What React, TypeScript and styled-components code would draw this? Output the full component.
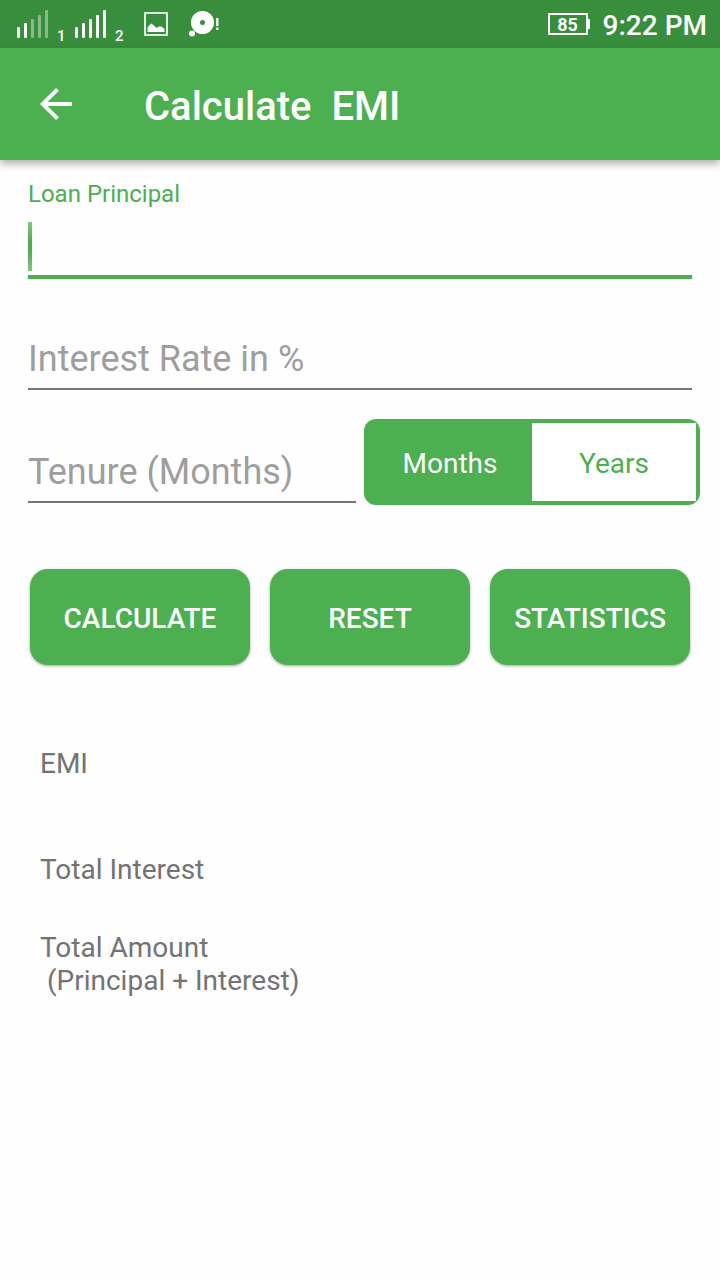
import { useState } from "react";
import styled, { createGlobalStyle, ThemeProvider } from "styled-components";

const theme = {
    colors: {
        primary: "#4caf50",
        primaryDark: "#388e3c",
        background: "#fefefe",
        hint: "#9e9e9e",
        line: "#757575",
        text: "#737373",
    },
};

type Unit = "Months" | "Years";

interface SignalProps {
    sim: number;
    strength: number;
}

const units: Unit[] = ["Months", "Years"];
const barTops = [17, 13, 9, 5, 0];

const Signal = ({sim, strength}: SignalProps) => (
    <SignalGroup>
        <svg width="31" height="28" viewBox="0 0 31 28" fill="#fff" aria-hidden="true">
            {barTops.map((top, i) => (
                <rect key={top} x={i * 7} y={top} width="3" height={28 - top} rx="1" opacity={i < strength ? 1 : 0.4}/>
            ))}
        </svg>
        <SimNumber>{sim}</SimNumber>
    </SignalGroup>
);

const PictureIcon = () => (
    <svg width="24" height="24" viewBox="0 0 24 24" aria-hidden="true">
        <rect x="1" y="1" width="22" height="22" fill="none" stroke="#fff" strokeOpacity="0.85" strokeWidth="2"/>
        <path d="M3.500 20v-4.500l2-2.500 2-1.500 2.500 2 2.500 2.500 2.500-1.500h2.500l3 2.500v3z" fill="#fff"/>
    </svg>
);

const DiscIcon = () => (
    <svg width="31" height="26" viewBox="0 0 31 26" fill="#fff" aria-hidden="true">
        <path fillRule="evenodd" d="M13.500 0a11.500 11.500 0 1 1 0 23a11.500 11.500 0 1 1 0-23zM13.500 9a2.500 2.500 0 1 0 0 5a2.500 2.500 0 1 0 0-5z"/>
        <circle cx="3" cy="22.500" r="3"/>
        <rect x="27" y="7" width="2.500" height="8" opacity="0.9"/>
        <rect x="27" y="16.500" width="2.500" height="2.500" opacity="0.9"/>
    </svg>
);

const App = () => {
    const [principal, setPrincipal] = useState("");
    const [rate, setRate] = useState("");
    const [tenure, setTenure] = useState("");
    const [unit, setUnit] = useState<Unit>("Months");

    const reset = () => {
        setPrincipal("");
        setRate("");
        setTenure("");
    };

    return (
        <ThemeProvider theme={theme}>
            <GlobalStyle/>
            <StatusBar>
                <StatusLeft>
                    <Signal sim={1} strength={2}/>
                    <Signal sim={2} strength={5}/>
                </StatusLeft>
                <StatusIcons>
                    <PictureIcon/>
                    <DiscIcon/>
                </StatusIcons>
                <Battery>85</Battery>
                <Clock>9:22 PM</Clock>
            </StatusBar>

            <AppBar>
                <BackButton type="button" aria-label="Back">
                    <svg width="32" height="32" viewBox="0 0 32 32" fill="#fff" aria-hidden="true">
                        <path d="M32 14H7.660L18.840 2.820 16 0 0 16l16 16 2.820-2.820L7.660 18H32z"/>
                    </svg>
                </BackButton>
                <Title>Calculate  EMI</Title>
            </AppBar>

            <main>
                <Form onSubmit={(e) => e.preventDefault()}>
                    <Field>
                        <Label htmlFor="principal">Loan Principal</Label>
                        <InputWrap>
                            <ActiveInput id="principal" inputMode="decimal" value={principal} onChange={(e) => setPrincipal(e.target.value)}/>
                            {!principal && <Caret/>}
                        </InputWrap>
                    </Field>
                    <RateField>
                        <Input aria-label="Interest Rate in %" placeholder="Interest Rate in %" inputMode="decimal" value={rate} onChange={(e) => setRate(e.target.value)}/>
                    </RateField>
                    <TenureRow>
                        <TenureField>
                            <Input aria-label={`Tenure (${unit})`} placeholder={`Tenure (${unit})`} inputMode="numeric" value={tenure} onChange={(e) => setTenure(e.target.value)}/>
                        </TenureField>
                        <Toggle role="radiogroup" aria-label="Tenure unit">
                            {units.map((item) => (
                                <Option key={item} $active={item === unit}>
                                    <input type="radio" name="unit" value={item} checked={item === unit} onChange={() => setUnit(item)}/>
                                    {item}
                                </Option>
                            ))}
                        </Toggle>
                    </TenureRow>
                    <Actions>
                        <Button type="submit">CALCULATE</Button>
                        <Button type="button" onClick={reset}>RESET</Button>
                        <Button type="button">STATISTICS</Button>
                    </Actions>
                </Form>

                <Results>
                    <Result $height={106}>EMI</Result>
                    <Result $height={78}>Total Interest</Result>
                    <Result $height={66}>{"Total Amount\n (Principal + Interest)"}</Result>
                </Results>
            </main>
        </ThemeProvider>
    );
};

const GlobalStyle = createGlobalStyle`
    * {
        box-sizing: border-box;
    }

    body {
        margin: 0;
        background: ${theme.colors.background};
        font-family: Roboto, sans-serif;
    }

    input, button {
        font-family: inherit;
    }
`;

const StatusBar = styled.header`
    display: flex;
    align-items: center;
    height: 48px;
    padding: 0 13px 0 17px;
    background: ${({theme}) => theme.colors.primaryDark};
    color: #fff;
`;

const StatusLeft = styled.div`
    display: flex;
    gap: 10px;
`;

const SignalGroup = styled.div`
    display: flex;
    align-items: flex-end;
    gap: 9px;
`;

const SimNumber = styled.span`
    width: 8px;
    height: 28px;
    padding-top: 17px;
    font-size: 15px;
    font-weight: 500;
    line-height: 18px;
`;

const StatusIcons = styled.div`
    display: flex;
    align-items: center;
    gap: 21px;
    margin-left: 21px;
    margin-right: auto;
`;

const Battery = styled.div`
    position: relative;
    width: 40px;
    height: 22px;
    border: 2px solid #fff;
    font-size: 18px;
    font-weight: 700;
    line-height: 20px;
    text-align: center;

    &::after {
        content: "";
        position: absolute;
        top: 4px;
        right: -4px;
        width: 2px;
        height: 10px;
        background: #fff;
    }
`;

const Clock = styled.time`
    margin-left: 15px;
    padding-top: 4px;
    font-size: 28px;
    font-weight: 500;
    line-height: 32px;
`;

const AppBar = styled.div`
    display: flex;
    align-items: center;
    height: 112px;
    padding-left: 32px;
    background: ${({theme}) => theme.colors.primary};
    box-shadow: 0 4px 8px rgba(0, 0, 0, 0.3);
    color: #fff;
`;

const BackButton = styled.button`
    display: flex;
    padding: 8px;
    border: 0;
    background: none;
    cursor: pointer;
`;

const Title = styled.h1`
    margin: 0;
    padding: 6px 0 0 64px;
    font-size: 40px;
    font-weight: 500;
    line-height: 48px;
    white-space: pre;
`;

const Form = styled.form`
    padding-top: 20px;
`;

const Field = styled.div`
    padding: 0 28px;
`;

const RateField = styled(Field)`
    margin-top: 59px;
`;

const Label = styled.label`
    display: block;
    color: ${({theme}) => theme.colors.primary};
    font-size: 24px;
    line-height: 28px;
`;

const InputWrap = styled.div`
    position: relative;
`;

const Input = styled.input`
    display: block;
    width: 100%;
    height: 52px;
    padding: 0 0 8px;
    border: 0;
    border-bottom: 2px solid ${({theme}) => theme.colors.line};
    border-radius: 0;
    outline: 0;
    background: none;
    color: #212121;
    font-size: 36px;
    line-height: 42px;

    &::placeholder {
        color: ${({theme}) => theme.colors.hint};
        opacity: 1;
    }
`;

const ActiveInput = styled(Input)`
    height: 71px;
    padding-top: 14px;
    border-bottom: 4px solid ${({theme}) => theme.colors.primary};
`;

const Caret = styled.span`
    position: absolute;
    left: 0;
    bottom: 8px;
    width: 4px;
    height: 49px;
    background: linear-gradient(#81c784, ${({theme}) => theme.colors.primary} 40%, ${({theme}) => theme.colors.primary} 60%, #81c784);
    pointer-events: none;
`;

const TenureRow = styled.div`
    display: flex;
    align-items: flex-end;
    gap: 8px;
    margin-top: 29px;
    padding: 0 20px 0 28px;
`;

const TenureField = styled.div`
    flex: 1;
    min-width: 0;
    padding-bottom: 2px;
`;

const Toggle = styled.div`
    display: grid;
    grid-template-columns: 1fr 1fr;
    width: 336px;
    height: 86px;
    padding: 4px;
    border-radius: 12px;
    background: ${({theme}) => theme.colors.primary};
`;

const Option = styled.label<{ $active: boolean }>`
    display: flex;
    align-items: center;
    justify-content: center;
    padding-top: 3px;
    background: ${({$active, theme}) => $active ? theme.colors.primary : "#fff"};
    color: ${({$active, theme}) => $active ? "#fff" : theme.colors.primary};
    font-size: 28px;
    line-height: 33px;
    cursor: pointer;

    input {
        position: absolute;
        width: 1px;
        height: 1px;
        margin: 0;
        opacity: 0;
    }
`;

const Actions = styled.div`
    display: grid;
    grid-template-columns: 11fr 10fr 10fr;
    gap: 20px;
    margin-top: 64px;
    padding: 0 30px;
`;

const Button = styled.button`
    height: 96px;
    padding: 3px 0 0;
    border: 0;
    border-radius: 18px;
    background: ${({theme}) => theme.colors.primary};
    box-shadow: 0 1px 3px rgba(0, 0, 0, 0.35);
    color: #fff;
    font-size: 28px;
    font-weight: 500;
    line-height: 33px;
    cursor: pointer;
`;

const Results = styled.section`
    padding: 82px 40px 40px;
`;

const Result = styled.p<{ $height: number }>`
    min-height: ${({$height}) => $height}px;
    margin: 0;
    color: ${({theme}) => theme.colors.text};
    font-size: 28px;
    line-height: 33px;
    white-space: pre-wrap;
`;

export default App;
